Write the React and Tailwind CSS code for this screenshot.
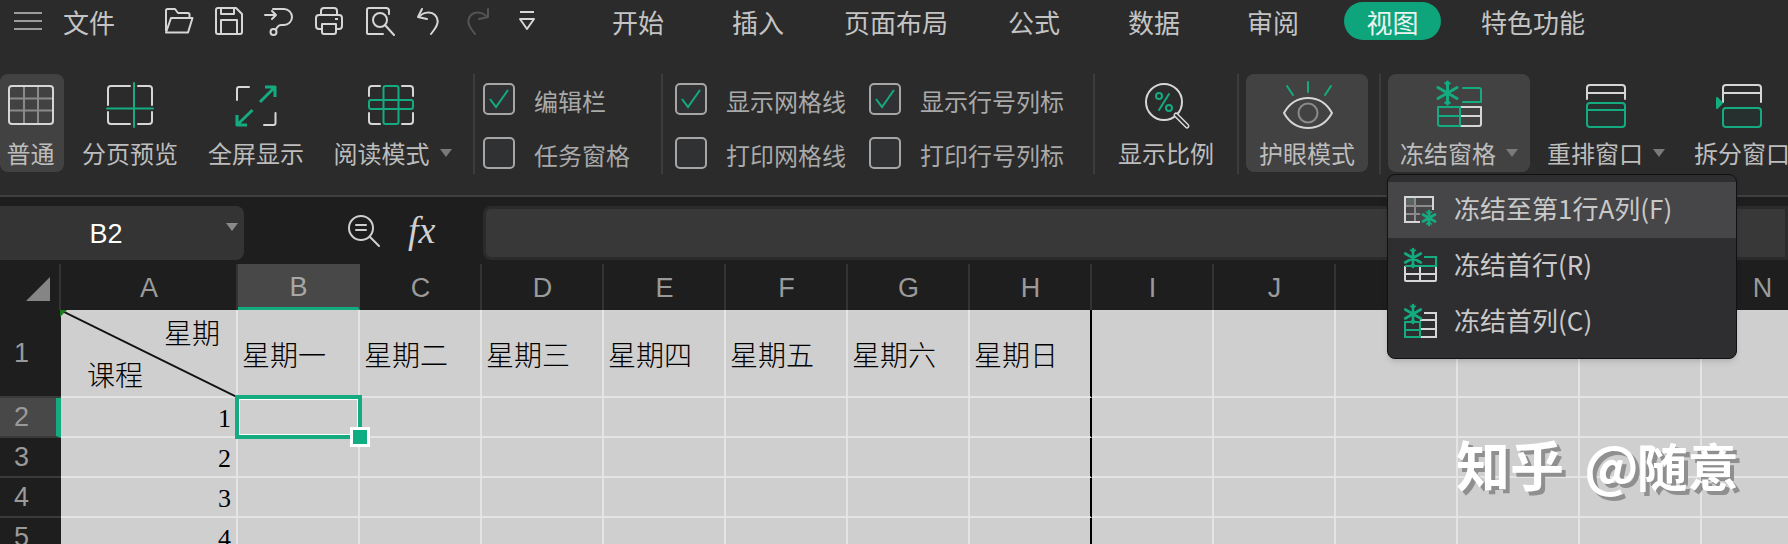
import React from 'react';

const G = '#14ab80';
const W = '#d6d6d6';
const D = '#8a8a8a';

const Snow = ({ x, y, r = 9, w = 2.4 }) => (
  <g stroke={G} strokeWidth={w} fill="none" strokeLinecap="round">
    <path d={`M${x} ${y - r}V${y + r}M${x - r * 0.87} ${y - r * 0.5}L${x + r * 0.87} ${y + r * 0.5}M${x - r * 0.87} ${y + r * 0.5}L${x + r * 0.87} ${y - r * 0.5}`} />
    <path d={`M${x - 2.5} ${y - r + 1}L${x} ${y - r + 3}L${x + 2.5} ${y - r + 1}M${x - 2.5} ${y + r - 1}L${x} ${y + r - 3}L${x + 2.5} ${y + r - 1}`} strokeWidth={w * 0.6} />
  </g>
);

// quick access icons
const QuickIcons = () => (
  <div className="flex items-center ml-[50px] h-[42px]">
    <svg className="w-[30px] h-[30px] mr-[20px]" viewBox="0 0 30 30" fill="none" stroke={W} strokeWidth="2" strokeLinejoin="round">
      <path d="M2 25V4.5A1.5 1.5 0 0 1 3.5 3H11l3 4h10a1.5 1.5 0 0 1 1.5 1.5V12" />
      <path d="M2 26.5L7 12h21.5L24 26.5Z" />
    </svg>
    <svg className="w-[30px] h-[30px] mr-[20px]" viewBox="0 0 30 30" fill="none" stroke={W} strokeWidth="2" strokeLinejoin="round">
      <path d="M2 4a2 2 0 0 1 2-2h18l6 6v18a2 2 0 0 1-2 2H4a2 2 0 0 1-2-2Z" />
      <path d="M7 28V14h16v14M7 2v6h13V2" />
    </svg>
    <svg className="w-[30px] h-[30px] mr-[20px]" viewBox="0 0 30 30" fill="none" stroke={W} strokeWidth="2" strokeLinejoin="round" strokeLinecap="round">
      <path d="M1 9h11M8 5l4 4-4 4" />
      <path d="M9 3h11a8 8 0 0 1 0 16h-3c-2 0-3 1-4 2.5l-1 2" />
      <circle cx="9.5" cy="26" r="3" />
    </svg>
    <svg className="w-[30px] h-[30px] mr-[20px]" viewBox="0 0 30 30" fill="none" stroke={W} strokeWidth="2" strokeLinejoin="round">
      <path d="M7 9V5a3 3 0 0 1 3-3h10a3 3 0 0 1 3 3v4" />
      <rect x="2" y="9" width="26" height="14" rx="3" />
      <path d="M8 18h14v8a2 2 0 0 1-2 2H10a2 2 0 0 1-2-2Z" fill="#2b2b2b" />
      <path d="M21 13h3" />
    </svg>
    <svg className="w-[32px] h-[30px] mr-[20px]" viewBox="0 0 32 30" fill="none" stroke={W} strokeWidth="2" strokeLinejoin="round" strokeLinecap="round">
      <path d="M22 2H5a2 2 0 0 0-2 2v23a1 1 0 0 0 1 1h15" />
      <path d="M22 2a3 3 0 0 1 3 3v3" />
      <circle cx="16" cy="14" r="7" />
      <path d="M21 19l9 10" />
    </svg>
    <svg className="w-[26px] h-[30px] mr-[22px]" viewBox="0 0 26 30" fill="none" stroke={W} strokeWidth="2" strokeLinejoin="round" strokeLinecap="round">
      <path d="M2 11l4-8M2 11l9 2" />
      <path d="M3 11c4-5 12-6 16-2 5 5 2 11-1 15l-3 4" />
    </svg>
    <svg className="w-[26px] h-[30px] mr-[28px]" viewBox="0 0 26 30" fill="none" stroke="#555" strokeWidth="2" strokeLinejoin="round" strokeLinecap="round">
      <path d="M24 11V3M24 11l-9 2" />
      <path d="M23 11c-4-5-12-6-16-2-5 5-2 11 1 15l3 4" />
    </svg>
    <svg className="w-[18px] h-[22px]" viewBox="0 0 18 22" fill="none" stroke={W} strokeWidth="2" strokeLinejoin="round">
      <path d="M2 2h14M2 9h14L9 19Z" />
    </svg>
  </div>
);

const RibbonIcon = ({ name }) => {
  const props = { className: 'w-[52px] h-[46px] overflow-visible', viewBox: '0 0 52 46', fill: 'none', strokeWidth: 2, strokeLinejoin: 'round', strokeLinecap: 'round' };
  if (name === 'normal') return (
    <svg {...props}>
      <path d="M19 4v38M33 4v38M4 16.5h44M4 28.5h44" stroke={D} />
      <rect x="4" y="4" width="44" height="38" rx="3" stroke={W} />
    </svg>
  );
  if (name === 'page') return (
    <svg {...props}>
      <path d="M26 4H7a3 3 0 0 0-3 3v16M34 4h11a3 3 0 0 1 3 3v16M4 30v9a3 3 0 0 0 3 3h19M34 42h11a3 3 0 0 0 3-3v-9" stroke={W} />
      <path d="M30 1v44M3 26.5h46" stroke={G} />
    </svg>
  );
  if (name === 'full') return (
    <svg {...props}>
      <path d="M7 18V7a2 2 0 0 1 2-2h10M45.5 31v10a2 2 0 0 1-2 2H34" stroke={W} />
      <path d="M30 20L45 5M35 5h10v10M22.5 28L7 43M7 33v10h10" stroke={G} strokeWidth="3" strokeLinecap="butt" />
    </svg>
  );
  if (name === 'read') return (
    <svg {...props}>
      <path d="M15 4H7a3 3 0 0 0-3 3v7M37 4h8a3 3 0 0 1 3 3v7M4 31v8a3 3 0 0 0 3 3h8M37 42h8a3 3 0 0 0 3-3v-8" stroke={W} />
      <rect x="18.5" y="4" width="15" height="38" rx="2" stroke={G} />
      <rect x="4" y="18" width="44" height="9" rx="2" stroke={G} />
    </svg>
  );
  if (name === 'zoom') return (
    <svg {...props}>
      <circle cx="24" cy="20" r="18" stroke={W} />
      <path d="M36 33l11 11" stroke={W} strokeWidth="5" />
      <path d="M36 33l11 11" stroke="#2b2b2b" strokeWidth="2" />
      <path d="M29 12L19 28" stroke={G} />
      <circle cx="19" cy="14" r="3" stroke={G} />
      <circle cx="29" cy="26" r="3" stroke={G} />
    </svg>
  );
  if (name === 'eye') return (
    <svg {...props}>
      <path d="M27 0v10M6 4l6 9M50 4l-6 9" stroke={G} />
      <path d="M3 31c5-9 13-15 24-15s19 6 24 15c-5 9-13 15-24 15S8 40 3 31Z" stroke={W} />
      <circle cx="27" cy="31" r="9.5" stroke={D} />
    </svg>
  );
  if (name === 'freeze') return (
    <svg {...props}>
      <path d="M27 25H48V42a2 2 0 0 1-2 2H27M27 34H48" stroke={W} />
      <path d="M30 6H46a2 2 0 0 1 2 2V20H30" stroke={G} />
      <path d="M5 25V42a2 2 0 0 0 2 2H27V25ZM5 34H27" stroke={G} />
      <Snow x={14.5} y={11} r={11} w={3} />
    </svg>
  );
  if (name === 'rearrange') return (
    <svg {...props}>
      <path d="M7 17V6a3 3 0 0 1 3-3h32a3 3 0 0 1 3 3v11M7 11h38" stroke={W} />
      <rect x="7" y="21" width="38" height="24" rx="3" stroke={G} fill="#26302e" />
      <path d="M7 28h38" stroke={G} />
    </svg>
  );
  if (name === 'split') return (
    <svg {...props}>
      <path d="M7 20V6a3 3 0 0 1 3-3h32a3 3 0 0 1 3 3v14M7 11h38" stroke={W} />
      <rect x="7" y="26" width="38" height="19" rx="3" stroke={G} fill="#26302e" />
      <path d="M1 16l5 5-5 5Z" fill={G} stroke={G} />
    </svg>
  );
  return null;
};

const Caret = () => <span className="w-0 h-0 border-x-[6px] border-x-transparent border-t-[8px] border-t-[#7a7a7a]" />;

const RibbonButton = ({ icon, label, caret, width, active, iconShift }) => (
  <div className={`${width} h-[98px] shrink-0 flex flex-col items-center pt-2 rounded-lg ${active ? 'bg-[#424242]' : ''}`}>
    <div className={iconShift}><RibbonIcon name={icon} /></div>
    <div className="mt-[11px] flex items-center h-[28px] gap-[10px] text-[24px] leading-[28px] text-[#bdbdbd] whitespace-nowrap">
      {label}
      {caret && <Caret />}
    </div>
  </div>
);

const Sep = ({ className }) => <div className={`w-[2px] h-[100px] bg-[#3c3c3c] shrink-0 ${className}`} />;

const Check = ({ checked, label, width }) => (
  <div className={`flex items-center h-[32px] ${width}`}>
    <div className="w-[32px] h-[32px] rounded-[5px] border-2 border-[#a6a6a6] bg-[#2f3133] flex items-center justify-center shrink-0">
      {checked && (
        <svg className="w-[24px] h-[24px]" viewBox="0 0 24 24" fill="none" stroke={G} strokeWidth="2">
          <path d="M3 12l6 8L21 3" />
        </svg>
      )}
    </div>
    <span className="ml-[19px] mt-[4px] text-[24px] text-[#a9a9a9] whitespace-nowrap">{label}</span>
  </div>
);

const CheckCol = ({ items, width }) => (
  <div className={`flex flex-col gap-[22px] pt-[9px] shrink-0 ${width}`}>
    {items.map((it) => <Check key={it.label} {...it} />)}
  </div>
);

const tabs = [
  { label: '开始', w: 'w-[120px]' },
  { label: '插入', w: 'w-[112px]' },
  { label: '页面布局', w: 'w-[164px]' },
  { label: '公式', w: 'w-[120px]' },
  { label: '数据', w: 'w-[119px]' },
  { label: '审阅', w: 'w-[97px]' },
];

const TopBar = () => (
  <div className="h-[42px] flex items-center text-[26px] text-[#c4c4c4]">
    <div className="ml-[14px] w-[28px] flex flex-col gap-[6px]">
      <span className="h-[2px] bg-[#9c9c9c]" />
      <span className="h-[2px] bg-[#9c9c9c]" />
      <span className="h-[2px] bg-[#9c9c9c]" />
    </div>
    <span className="ml-[21px] w-[51px] whitespace-nowrap">文件</span>
    <QuickIcons />
    <div className="ml-[76px] flex items-center">
      {tabs.map((t) => <span key={t.label} className={`${t.w} whitespace-nowrap`}>{t.label}</span>)}
      <span className="w-[97px] h-[38px] rounded-full bg-[#0ea57c] text-[#eaf5f1] flex items-center justify-center">视图</span>
      <span className="ml-[40px] whitespace-nowrap">特色功能</span>
    </div>
  </div>
);

const Ribbon = () => (
  <div className="h-[153px] pt-[32px] flex items-start">
    <RibbonButton icon="normal" label="普通" width="w-[64px] pr-[3px]" active />
    <RibbonButton icon="page" label="分页预览" width="w-[132px]" />
    <RibbonButton icon="full" label="全屏显示" width="w-[120px]" />
    <RibbonButton icon="read" label="阅读模式" caret width="w-[148px] pl-[5px]" iconShift="-ml-[3px]" />
    <Sep className="ml-[9px]" />
    <div className="w-[8px] shrink-0" />
    <CheckCol
      width="w-[178px]"
      items={[
        { checked: true, label: '编辑栏' },
        { checked: false, label: '任务窗格' },
      ]}
    />
    <Sep />
    <div className="w-[12px] shrink-0" />
    <CheckCol
      width="w-[194px]"
      items={[
        { checked: true, label: '显示网格线' },
        { checked: false, label: '打印网格线' },
      ]}
    />
    <CheckCol
      width="w-[224px]"
      items={[
        { checked: true, label: '显示行号列标' },
        { checked: false, label: '打印行号列标' },
      ]}
    />
    <Sep className="mr-[10px]" />
    <RibbonButton icon="zoom" label="显示比例" width="w-[122px]" />
    <Sep className="mr-[7px] ml-[10px]" />
    <RibbonButton icon="eye" label="护眼模式" width="w-[122px]" active />
    <Sep className="ml-[11px] mr-[7px]" />
    <RibbonButton icon="freeze" label="冻结窗格" caret width="w-[142px]" active />
    <RibbonButton icon="rearrange" label="重排窗口" caret width="w-[152px]" />
    <RibbonButton icon="split" label="拆分窗口" width="w-[120px]" />
  </div>
);

const FormulaBar = () => (
  <div className="h-[67px] bg-[#1e1e1e] flex items-center">
    <div className="w-[244px] h-[54px] mt-[4px] rounded-r-lg bg-[#343434] relative flex items-center justify-center pr-[32px] pt-[3px] text-[27px] text-white" style={{ fontFamily: '"Liberation Sans", sans-serif' }}>
      B2
      <span className="absolute right-[6px] top-[17px] w-0 h-0 border-x-[6px] border-x-transparent border-t-[8px] border-t-[#8a8a8a]" />
    </div>
    <svg className="ml-[103px] w-[34px] h-[34px]" viewBox="0 0 34 34" fill="none" stroke="#cfcfcf" strokeWidth="2" strokeLinecap="round">
      <circle cx="14" cy="14" r="12" />
      <path d="M23 23l9 9M9 11h10M9 16h10" />
    </svg>
    <span className="ml-[27px] w-[40px] text-[38px] italic text-[#d0d0d0]" style={{ fontFamily: '"Liberation Serif", serif' }}>fx</span>
    <div className="ml-[35px] flex-1 h-[54px] mt-[4px] rounded-l-lg border-[3px] border-[#2b2b2b] bg-[#383838]" />
  </div>
);

const colNames = ['A', 'B', 'C', 'D', 'E', 'F', 'G', 'H', 'I', 'J', 'K', 'L', 'M', 'N'];
const days = ['星期一', '星期二', '星期三', '星期四', '星期五', '星期六', '星期日'];
const serif = { fontFamily: '"Liberation Serif", "Noto Sans CJK SC", serif' };

const Sheet = () => {
  const rows = [1, 2, 3, 4, 5];
  const freezeCol = (c) => (c === 'H' ? 'border-r-black' : 'border-r-[#e4e4e4]');
  return (
    <div className="relative h-[280px] overflow-hidden bg-[#cfcfcf]">
      <div className="grid grid-cols-[61px_177px_repeat(13,122px)] grid-rows-[46px_88px_40px_40px_40px_40px]" style={{ fontFamily: '"Liberation Sans", sans-serif' }}>
        {/* header row */}
        <div className="bg-[#1e1e1e] border-r-2 border-[#333] flex items-end justify-end pr-[9px] pb-[9px]">
          <span className="w-0 h-0 border-l-[24px] border-l-transparent border-b-[24px] border-b-[#858585]" />
        </div>
        {colNames.map((c) => (
          <div
            key={c}
            className={`flex items-center justify-center pl-[1px] pt-[3px] text-[27px] border-r-2 ${
              c === 'B'
                ? 'bg-[#484848] border-r-[#484848] border-b-[3px] border-b-[#14ab80] text-[#a8a8a8]'
                : 'bg-[#1e1e1e] border-r-[#333] text-[#9a9a9a]'
            }`}
          >
            {c}
          </div>
        ))}
        {rows.map((r) => (
          <React.Fragment key={r}>
            <div className={`flex items-center pl-[14px] text-[27px] text-[#9a9a9a] border-b-2 border-[#3a3a3a] ${r === 2 ? 'bg-[#484848] border-r-[5px] border-r-[#14ab80]' : 'bg-[#1e1e1e]'}`}>
              {r}
            </div>
            {colNames.map((c) => (
              <div
                key={c}
                style={serif}
                className={`border-r-2 border-b-2 border-b-[#e4e4e4] ${freezeCol(c)} text-black text-[28px] font-light whitespace-nowrap overflow-hidden flex items-center ${
                  c === 'A' ? 'justify-end pr-[5px]' : 'pl-[4px]'
                }`}
              >
                {r === 1 && c !== 'A' && <span className="mt-[8px]">{days[colNames.indexOf(c) - 1]}</span>}
                {r > 1 && c === 'A' && <span className="text-[26px] relative top-[1px]">{r - 1}</span>}
              </div>
            ))}
          </React.Fragment>
        ))}
      </div>

      {/* A1 diagonal header */}
      <svg className="absolute left-[60px] top-[46px] w-[177px] h-[87px]" viewBox="0 0 177 87">
        <path d="M0 0L177 87" stroke="#111" strokeWidth="2" />
        <path d="M0 0h7L0 7Z" fill="#1a7a1a" />
      </svg>
      <span className="absolute left-[164px] top-[50px] text-[28px] font-light text-black" style={serif}>星期</span>
      <span className="absolute left-[87px] top-[92px] text-[28px] font-light text-black" style={serif}>课程</span>

      {/* selected cell */}
      <div className="absolute left-[235px] top-[131px] w-[127px] h-[44px] border-4 border-[#14ab80]">
        <div className="w-full h-full border border-white" />
      </div>
      <div className="absolute left-[350px] top-[163px] w-[20px] h-[20px] border-[3px] border-white bg-[#0fae82]" />
    </div>
  );
};

const FreezeIcon = ({ kind }) => (
  <svg className="w-[34px] h-[34px] shrink-0 overflow-visible" viewBox="0 0 34 34" fill="none" strokeWidth="2">
    {kind === 'cell' && (
      <>
        <path d="M1 4h9v9H1Z" fill="#5a6461" />
        <path d="M11 4v25M1 13h28M1 21h15" stroke="#8a8a8a" />
        <path d="M16 29H1V4h28v13" stroke={W} />
        <Snow x={25} y={25} r={7} w={2.6} />
      </>
    )}
    {kind === 'row' && (
      <>
        <path d="M1 17v14a1 1 0 0 0 1 1h29a1 1 0 0 0 1-1V17M1 25h31M16 17v15" stroke={W} />
        <path d="M1 17h31V8H20" stroke={G} />
        <Snow x={9} y={9} r={9} w={2.6} />
      </>
    )}
    {kind === 'col' && (
      <>
        <path d="M20 8h12v24H16M16 15h16M16 24h16" stroke={W} />
        <path d="M1 17v15h15V17ZM1 25h15" stroke={G} />
        <Snow x={9} y={9} r={9} w={2.6} />
      </>
    )}
  </svg>
);

const FreezeMenu = () => {
  const items = [
    { kind: 'cell', label: '冻结至第1行A列(F)', active: true },
    { kind: 'row', label: '冻结首行(R)' },
    { kind: 'col', label: '冻结首列(C)' },
  ];
  return (
    <div className="absolute left-[1387px] top-[174px] w-[350px] h-[185px] pt-[7px] rounded-lg bg-[#2e2e30] border border-[#111] shadow-md">
      {items.map((it) => (
        <div key={it.kind} className={`h-[56px] flex items-center pl-[16px] gap-[16px] text-[26px] text-[#c9c9c9] whitespace-nowrap ${it.active ? 'bg-[#464648]' : ''}`}>
          <FreezeIcon kind={it.kind} />
          <span className="mb-[5px]">{it.label}</span>
        </div>
      ))}
    </div>
  );
};

export default function App() {
  return (
    <div className="relative w-[1788px] h-[544px] overflow-hidden bg-[#2b2b2b]" style={{ fontFamily: '"Noto Sans CJK SC", sans-serif' }}>
      <TopBar />
      <Ribbon />
      <div className="h-[2px] bg-[#3f3f3f]" />
      <FormulaBar />
      <Sheet />
      <FreezeMenu />
      <div className="absolute left-[1456px] top-[423px] text-[54px] font-bold text-white whitespace-nowrap [word-spacing:8px] [text-shadow:4px_4px_0_#8f8f8f]">
        知乎 @<span className="-ml-[2px] text-[51px]">随意</span>
      </div>
    </div>
  );
}
